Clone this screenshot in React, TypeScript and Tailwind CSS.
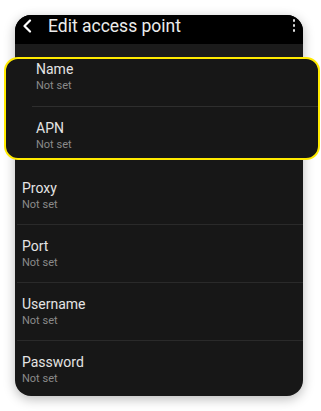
const rows = ['Proxy', 'Port', 'Username', 'Password']

function Field({ label }: { label: string }) {
  return (
    <div>
      <div className="text-[14px] leading-[20px] text-[#e4e4e4]">{label}</div>
      <div className="text-[11px] leading-[14px] text-[#8a8a8a]">Not set</div>
    </div>
  )
}

export default function App() {
  return (
    <div className="min-h-screen bg-white pl-[15px] pt-[15px] font-['Roboto',sans-serif]">
      <div className="w-[288px] rounded-[16px] bg-[#171717] shadow-[0_3px_12px_rgba(0,0,0,0.28)]">
        <header className="flex h-[29px] items-start rounded-t-[16px] bg-black pl-[6px] pr-[8px]">
          <svg
            viewBox="0 0 12 14"
            className="mt-[4px] h-[14px] w-[12px] text-white"
            fill="none"
            stroke="currentColor"
            strokeWidth="2.2"
            strokeLinecap="round"
            strokeLinejoin="round"
          >
            <path d="M9 1.5 3.5 7 9 12.5" />
          </svg>
          <h1 className="ml-[15px] flex-1 text-[17.5px] leading-[22px] text-[#ececec]">Edit access point</h1>
          <div className="mt-[4px] flex flex-col gap-[2.5px]">
            <span className="h-[2.5px] w-[2.5px] rounded-full bg-[#dcdcdc]" />
            <span className="h-[2.5px] w-[2.5px] rounded-full bg-[#dcdcdc]" />
            <span className="h-[2.5px] w-[2.5px] rounded-full bg-[#dcdcdc]" />
          </div>
        </header>
        <div className="h-[13px] bg-[#1b1b1b]" />
        <div className="relative -ml-[11px] -mr-[17px] h-[103px] rounded-[14px] border-2 border-[#ffea00] bg-[#171717]">
          <div className="pb-[13px] pl-[30px]">
            <Field label="Name" />
          </div>
          <div className="ml-[26px] h-px bg-[#2e2e2e]" />
          <div className="pl-[30px] pt-[11px]">
            <Field label="APN" />
          </div>
        </div>
        {rows.map((r, i) => (
          <div key={r}>
            {i > 0 && <div className="ml-[2px] h-px bg-[#2a2a2a]" />}
            <div
              className={`pl-[7px] ${
                i === 0 ? 'pt-[18px] pb-[12px]' : i === rows.length - 1 ? 'pt-[11px] pb-[10px]' : 'pt-[11px] pb-[12px]'
              }`}
            >
              <Field label={r} />
            </div>
          </div>
        ))}
      </div>
    </div>
  )
}
